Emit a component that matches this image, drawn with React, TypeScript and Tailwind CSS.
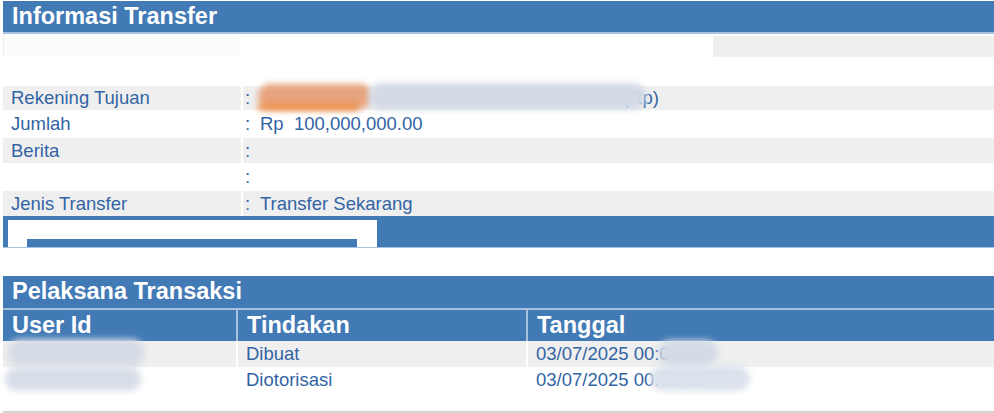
const blue = "bg-[#427ab6]";

const Blur = ({ className }: { className: string }) => (
  <span className={`pointer-events-none absolute rounded-full blur-[3px] ${className}`} />
);

const InfoRow = ({
  label,
  value,
  gray,
  h,
  children,
}: {
  label: string;
  value?: string;
  gray?: boolean;
  h: string;
  children?: React.ReactNode;
}) => (
  <div className={`flex gap-[2px] ${h}`}>
    <div className={`flex w-[238px] items-center pl-[8px] ${gray ? "bg-[#efefef]" : ""}`}>{label}</div>
    <div className={`relative flex flex-1 items-center pl-[2px] ${gray ? "bg-[#efefef]" : ""}`}>
      <span className="w-[15px]">:</span>
      <span className="whitespace-pre">{value}</span>
      {children}
    </div>
  </div>
);

export default function App() {
  return (
    <div className="min-h-[413px] bg-white pl-[3px] pt-[1px] font-['Liberation_Sans',Arial,sans-serif] text-[18.5px] text-[#3264a4]">
      {/* Informasi Transfer */}
      <div className={`flex h-[33px] items-center border-b-2 border-[#a8c1de] pl-[9px] ${blue}`}>
        <h2 className="text-[23.5px] font-bold text-white">Informasi Transfer</h2>
      </div>
      <div className="flex h-[23px] gap-[2px]">
        <div className="w-[238px] border-l border-[#ececec] bg-[#fcfcfc]" />
        <div className="flex-1" />
        <div className="mt-[2px] w-[281px] bg-[#efefef]" />
      </div>
      <div className="h-[29px]" />

      <InfoRow label="Rekening Tujuan" gray h="h-[24px]">
        <span className="w-[363px] shrink-0" />
        <span>(Rp)</span>
        <Blur className="left-[15px] top-[-2px] h-[25px] w-[114px] bg-[#e8a47e]" />
        <Blur className="left-[15px] top-[18px] h-[6px] w-[100px] rounded-none bg-[#f08a3c]" />
        <Blur className="left-[125px] top-[-3px] h-[27px] w-[278px] bg-[#d3dbe7]" />
      </InfoRow>
      <InfoRow label="Jumlah" value="Rp  100,000,000.00" h="h-[28px]" />
      <InfoRow label="Berita" gray h="h-[25px]" />
      <InfoRow label="" h="h-[28px]" />
      <InfoRow label="Jenis Transfer" value="Transfer Sekarang" gray h="h-[25px]" />

      <div className={`flex h-[32px] items-end border-b border-[#a8c1de] pl-[5px] ${blue}`}>
        <div className="flex h-[27px] w-[369px] items-end bg-white pl-[19px]">
          <div className={`h-[8px] w-[330px] ${blue}`} />
        </div>
      </div>
      <div className="h-[28px]" />

      {/* Pelaksana Transaksi */}
      <div className={`flex h-[32px] items-center pl-[9px] ${blue}`}>
        <h2 className="text-[23.5px] font-bold text-white">Pelaksana Transaksi</h2>
      </div>
      <div className="h-[2px] bg-[#a8c1de]" />
      <div className="flex h-[31px] gap-[2px] bg-[#a8c1de] text-[23.5px] font-bold text-white">
        <div className={`flex w-[233px] items-center pl-[9px] ${blue}`}>User Id</div>
        <div className={`flex w-[288px] items-center pl-[9px] ${blue}`}>Tindakan</div>
        <div className={`flex flex-1 items-center pl-[9px] ${blue}`}>Tanggal</div>
      </div>
      <div className="flex h-[26px] gap-[2px] bg-white">
        <div className="relative w-[233px] bg-[#efefef]">
          <Blur className="left-[4px] top-[-2px] h-[28px] w-[138px] bg-[#d6dce6]" />
        </div>
        <div className="flex w-[288px] items-center bg-[#efefef] pl-[8px]">Dibuat</div>
        <div className="relative flex flex-1 items-center bg-[#efefef] pl-[8px]">
          03/07/2025 00:00:00
          <Blur className="left-[130px] top-[-1px] h-[26px] w-[60px] bg-[#d3dbe7]" />
        </div>
      </div>
      <div className="flex h-[26px] gap-[2px]">
        <div className="relative w-[233px]">
          <Blur className="left-[2px] top-[0px] h-[24px] w-[136px] bg-[#d8dee8]" />
        </div>
        <div className="flex w-[288px] items-center pl-[8px]">Diotorisasi</div>
        <div className="relative flex flex-1 items-center pl-[8px]">
          03/07/2025 00:00:00
          <Blur className="left-[122px] top-[-1px] h-[25px] w-[100px] bg-[#dbe2ec]" />
        </div>
      </div>
      <div className="h-[18px]" />
      <div className="h-[2px] bg-[#d4d4d4]" />
    </div>
  );
}
